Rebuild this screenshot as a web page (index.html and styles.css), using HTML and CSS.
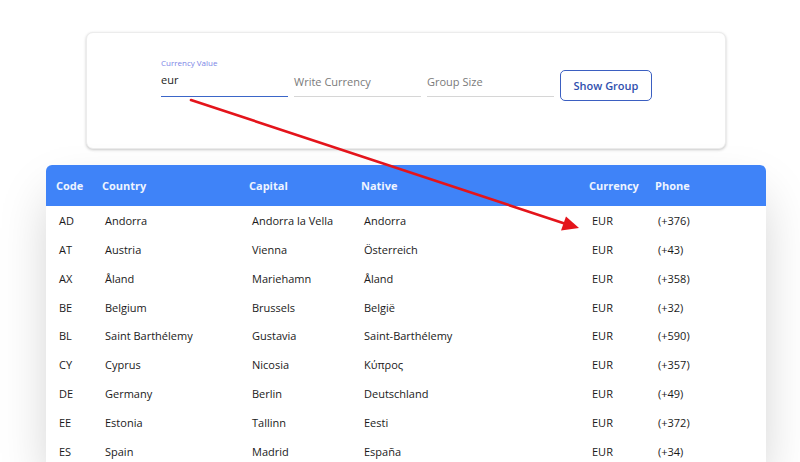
FILE: index.html
```html
<!DOCTYPE html>
<html>
<head>
<meta charset="utf-8">
<link rel="stylesheet" href="styles.css">
</head>
<body>
<div class="page">
  <div class="card">
    <div class="form">
      <div class="field active">
        <label class="label">Currency Value</label>
        <div class="input">eur</div>
      </div>
      <div class="field">
        <label class="label"></label>
        <div class="input placeholder">Write Currency</div>
      </div>
      <div class="field">
        <label class="label"></label>
        <div class="input placeholder">Group Size</div>
      </div>
      <button class="btn">Show Group</button>
    </div>
  </div>
  <div class="table-wrap">
    <table class="table">
      <colgroup>
        <col class="c1"><col class="c2"><col class="c3"><col class="c4"><col class="c5"><col class="c6">
      </colgroup>
      <thead>
        <tr><th>Code</th><th>Country</th><th>Capital</th><th>Native</th><th>Currency</th><th>Phone</th></tr>
      </thead>
      <tbody>
        <tr><td>AD</td><td>Andorra</td><td>Andorra la Vella</td><td>Andorra</td><td>EUR</td><td>(+376)</td></tr>
        <tr><td>AT</td><td>Austria</td><td>Vienna</td><td>Österreich</td><td>EUR</td><td>(+43)</td></tr>
        <tr><td>AX</td><td>Åland</td><td>Mariehamn</td><td>Åland</td><td>EUR</td><td>(+358)</td></tr>
        <tr><td>BE</td><td>Belgium</td><td>Brussels</td><td>België</td><td>EUR</td><td>(+32)</td></tr>
        <tr><td>BL</td><td>Saint Barthélemy</td><td>Gustavia</td><td>Saint-Barthélemy</td><td>EUR</td><td>(+590)</td></tr>
        <tr><td>CY</td><td>Cyprus</td><td>Nicosia</td><td>Κύπρος</td><td>EUR</td><td>(+357)</td></tr>
        <tr><td>DE</td><td>Germany</td><td>Berlin</td><td>Deutschland</td><td>EUR</td><td>(+49)</td></tr>
        <tr><td>EE</td><td>Estonia</td><td>Tallinn</td><td>Eesti</td><td>EUR</td><td>(+372)</td></tr>
        <tr><td>ES</td><td>Spain</td><td>Madrid</td><td>España</td><td>EUR</td><td>(+34)</td></tr>
      </tbody>
    </table>
  </div>
  <svg class="arrow" width="800" height="462" viewBox="0 0 800 462">
    <line x1="191" y1="100" x2="566" y2="224" stroke="#e4141b" stroke-width="2.6" stroke-linecap="round"/>
    <polygon points="579,228 561,230.5 566,216.5" fill="#e4141b"/>
  </svg>
</div>
</body>
</html>
```

FILE: styles.css
```css
html, body {
  margin: 0;
  padding: 0;
  background: #ffffff;
  overflow: hidden;
}
.page {
  position: relative;
  width: 800px;
  height: 462px;
  overflow: hidden;
  padding-top: 32px;
  box-sizing: border-box;
  font-family: "Open Sans", "Liberation Sans", sans-serif;
  color: #222;
}
.card {
  margin-left: 86px;
  width: 640px;
  height: 117px;
  box-sizing: border-box;
  border: 1px solid #ececec;
  border-radius: 7px;
  box-shadow: 0 1px 3px rgba(0,0,0,0.22);
  background: #fff;
  padding-top: 24px;
}
.form {
  display: flex;
  justify-content: center;
  align-items: flex-start;
  gap: 6px;
  padding-left: 1px;
}
.field {
  width: 127px;
  display: flex;
  flex-direction: column;
}
.label {
  height: 11px;
  font-size: 8px;
  line-height: 11px;
  color: #7b84e6;
}
.input {
  height: 28px;
  line-height: 27px;
  font-size: 11px;
  color: #1a1a1a;
  border-bottom: 1px solid #d6d6d6;
}
.field.active .input {
  border-bottom: 1px solid #3b66c8;
  line-height: 24px;
}
.input.placeholder {
  color: #7a7a7a;
}
.btn {
  margin-top: 13px;
  width: 92px;
  height: 31px;
  border: 1px solid #3b5fc1;
  border-radius: 5px;
  background: #fff;
  color: #2f4fae;
  font-family: "Open Sans", "Liberation Sans", sans-serif;
  font-size: 11px;
  font-weight: 600;
  padding: 0;
}
.table-wrap {
  margin-top: 16px;
  margin-left: 46px;
  width: 720px;
  border-radius: 6px 6px 0 0;
  overflow: hidden;
  box-shadow: 0 25px 50px -8px rgba(0,0,0,0.22);
  background: #fff;
}
.table {
  width: 720px;
  border-collapse: collapse;
  table-layout: fixed;
  font-size: 11px;
}
.c1 { width: 46px; }
.c2 { width: 147px; }
.c3 { width: 112px; }
.c4 { width: 228px; }
.c5 { width: 66px; }
.c6 { width: 121px; }
.table th {
  background: #3f83f8;
  color: #eef4ff;
  font-weight: 700;
  text-align: left;
  height: 41px;
  padding: 0 0 0 10px;
  white-space: nowrap;
}
.table td {
  height: 28.875px;
  padding: 0 0 0 13px;
  white-space: nowrap;
  color: #1a1a1a;
}
.arrow {
  position: absolute;
  left: 0;
  top: 0;
  pointer-events: none;
}
```
